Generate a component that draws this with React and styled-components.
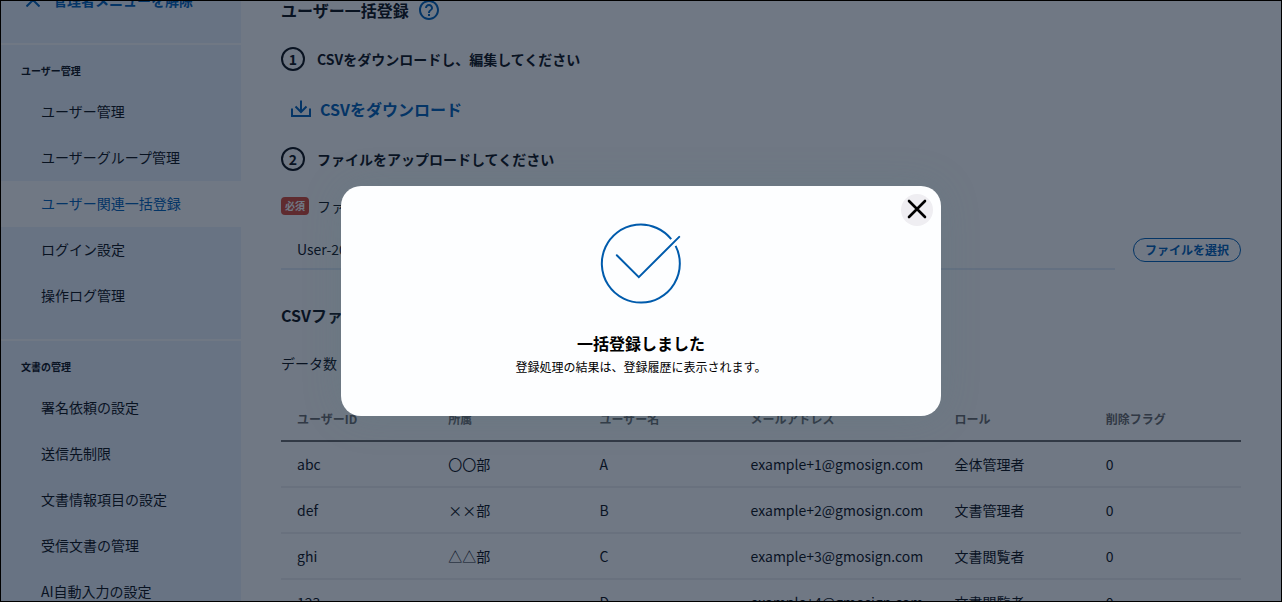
import React, { useState } from 'react'
import styled, { createGlobalStyle, css } from 'styled-components'

const colors = {
    text: '#16191f',
    blue: '#005bac',
    link: '#0a66ba',
    side: '#ecf3fc',
    line: '#f0f0f2',
    red: '#d8503f',
}

const userMenu = ['ユーザー管理', 'ユーザーグループ管理', 'ユーザー関連一括登録', 'ログイン設定', '操作ログ管理']
const docMenu = ['署名依頼の設定', '送信先制限', '文書情報項目の設定', '受信文書の管理', 'AI自動入力の設定']

const columns = ['ユーザーID', '所属', 'ユーザー名', 'メールアドレス', 'ロール', '削除フラグ']

const users = [
    ['abc', '〇〇部', 'A', 'example+1@gmosign.com', '全体管理者', '0'],
    ['def', '××部', 'B', 'example+2@gmosign.com', '文書管理者', '0'],
    ['ghi', '△△部', 'C', 'example+3@gmosign.com', '文書閲覧者', '0'],
    ['123', '', 'D', 'example+4@gmosign.com', '文書閲覧者', '0'],
]

const NavSection = ({ title, items, active }) => (
    <Section>
        <SectionTitle>{title}</SectionTitle>
        {items.map((item) => (
            <NavLink key={item} href="#" $active={item === active}>{item}</NavLink>
        ))}
    </Section>
)

const CompleteModal = ({ onClose }) => (
    <Overlay>
        <Modal role="dialog" aria-modal="true" aria-labelledby="modal-title">
            <CloseButton type="button" aria-label="閉じる" onClick={onClose}>
                <svg width="32" height="32" viewBox="0 0 32 32" fill="none" stroke="#000" strokeWidth="2.6" strokeLinecap="round">
                    <path d="M8 7l16 16M24 7L8 23" />
                </svg>
            </CloseButton>
            <svg width="82" height="82" viewBox="0 0 82 82" fill="none" stroke={colors.blue} strokeWidth="2" strokeLinecap="round" strokeLinejoin="miter">
                <path d="M71.2 17.1A39 39 0 1 0 75.6 23.900" strokeLinecap="butt" />
                <path d="M16.8 33.3L38.8 55.1L79.2 14.9" />
            </svg>
            <ModalTitle id="modal-title">一括登録しました</ModalTitle>
            <ModalText>登録処理の結果は、登録履歴に表示されます。</ModalText>
        </Modal>
    </Overlay>
)

const App = () => {
    const [open, setOpen] = useState(true)

    return (
        <Frame>
            <GlobalStyle />
            <Layout>
                <Sidebar>
                    <ReleaseButton type="button">
                        <svg width="14" height="14" viewBox="0 0 14 14" fill="none" stroke="currentColor" strokeWidth="2">
                            <path d="M0.5 0.5l13 13M13.5 0.5l-13 13" />
                        </svg>
                        管理者メニューを解除
                    </ReleaseButton>
                    <NavSection title="ユーザー管理" items={userMenu} active="ユーザー関連一括登録" />
                    <NavSection title="文書の管理" items={docMenu} />
                </Sidebar>
                <Main>
                    <TitleRow>
                        <Heading as="h1">ユーザー一括登録</Heading>
                        <HelpButton type="button" aria-label="ヘルプ">
                            <svg width="20" height="20" viewBox="2 2 20 20" fill="currentColor">
                                <path d="M11 18h2v-2h-2v2zm1-16C6.480 2 2 6.480 2 12s4.480 10 10 10 10-4.480 10-10S17.520 2 12 2zm0 18c-4.410 0-8-3.590-8-8s3.590-8 8-8 8 3.590 8 8-3.590 8-8 8zm0-14c-2.210 0-4 1.790-4 4h2c0-1.100.900-2 2-2s2 .900 2 2c0 2-3 1.750-3 5h2c0-2.250 3-2.500 3-5 0-2.210-1.790-4-4-4z" />
                            </svg>
                        </HelpButton>
                    </TitleRow>
                    <Step>
                        <StepNumber>1</StepNumber>
                        CSVをダウンロードし、編集してください
                    </Step>
                    <DownloadLink href="#">
                        <svg width="22" height="20" viewBox="0 0 22 20" fill="none" stroke="currentColor" strokeWidth="2">
                            <path d="M2 9.500V17H20V9.500M11 1.500V13M5.500 7.500L11 13L16.500 7.500" />
                        </svg>
                        CSVをダウンロード
                    </DownloadLink>
                    <Step>
                        <StepNumber>2</StepNumber>
                        ファイルをアップロードしてください
                    </Step>
                    <FieldLabel htmlFor="csv-file">
                        <Required>必須</Required>
                        ファイル
                    </FieldLabel>
                    <FileRow>
                        <FileName id="csv-file" type="text" readOnly defaultValue="User-2024.csv" />
                        <SelectButton type="button">ファイルを選択</SelectButton>
                    </FileRow>
                    <PreviewHeading>CSVファイル</PreviewHeading>
                    <DataCount>データ数</DataCount>
                    <Table>
                        <thead>
                            <tr>
                                {columns.map((name) => (
                                    <Th key={name} $wide={name === 'メールアドレス'}>{name}</Th>
                                ))}
                            </tr>
                        </thead>
                        <tbody>
                            {users.map((row) => (
                                <tr key={row[0]}>
                                    {row.map((cell, i) => <Td key={i}>{cell}</Td>)}
                                </tr>
                            ))}
                        </tbody>
                    </Table>
                </Main>
            </Layout>
            {open && <CompleteModal onClose={() => setOpen(false)} />}
        </Frame>
    )
}

export default App


const GlobalStyle = createGlobalStyle`
    * {
        box-sizing: border-box;
    }

    body {
        margin: 0;
        font-family: "Noto Sans CJK JP", sans-serif;
        font-size: 14px;
        line-height: 24px;
        color: ${colors.text};
        background-color: #fff;
    }

    h1, h2, p {
        margin: 0;
    }

    button, input {
        font-family: inherit;
        color: inherit;
    }

    svg {
        flex-shrink: 0;
    }
`

const Frame = styled.div`
    position: relative;
    height: 100vh;
    border: 1px solid #000;
    overflow: hidden;
`

/* starts slightly scrolled under the top edge */
const Layout = styled.div`
    display: flex;
    min-height: calc(100vh + 20px);
    margin-top: -20px;
`

const Sidebar = styled.nav`
    flex: 0 0 240px;
    background-color: ${colors.side};
`

const ReleaseButton = styled.button`
    display: flex;
    align-items: center;
    gap: 13px;
    height: 38px;
    margin-bottom: 24px;
    padding: 0 0 0 25px;
    border: 0;
    background: none;
    color: ${colors.link};
    font-size: 14px;
    font-weight: 700;
`

const Section = styled.section`
    padding: 16px 0 20px;
    border-top: 2px solid #fff;
`

const SectionTitle = styled.h2`
    padding: 0 20px 8px;
    font-size: 10px;
    font-weight: 700;
    line-height: 20px;
`

const NavLink = styled.a`
    display: block;
    padding: 0 0 2px 40px;
    line-height: 44px;
    color: ${colors.text};
    text-decoration: none;

    ${(props) => props.$active && css`
        background-color: #fff;
        color: ${colors.link};
    `}
`

const Main = styled.main`
    flex: 1;
    min-width: 0;
    padding: 15px 40px 40px;
`

const TitleRow = styled.div`
    display: flex;
    align-items: center;
    gap: 10px;
    height: 28px;
    margin-bottom: 23px;
`

const Heading = styled.h2`
    font-size: 16px;
    font-weight: 700;
    line-height: 28px;
`

const HelpButton = styled.button`
    display: flex;
    padding: 0;
    border: 0;
    background: none;
    color: ${colors.link};
`

const Step = styled.p`
    display: flex;
    align-items: center;
    gap: 12px;
    font-weight: 700;
`

const StepNumber = styled.span`
    width: 24px;
    height: 24px;
    border: 2px solid ${colors.text};
    border-radius: 50%;
    line-height: 20px;
    text-align: center;
`

const DownloadLink = styled.a`
    display: flex;
    align-items: center;
    gap: 8px;
    width: fit-content;
    margin: 26px 0;
    padding-left: 9px;
    color: ${colors.link};
    font-size: 16px;
    font-weight: 700;
    text-decoration: none;
`

const FieldLabel = styled.label`
    display: flex;
    align-items: center;
    gap: 8px;
    margin-top: 23px;
`

const Required = styled.span`
    padding: 0 4px;
    border-radius: 4px;
    background-color: ${colors.red};
    color: #fff;
    font-size: 10px;
    font-weight: 700;
    line-height: 18px;
`

const FileRow = styled.div`
    display: flex;
    align-items: center;
    gap: 18px;
    margin-top: 12px;
`

const FileName = styled.input`
    flex: 1;
    min-width: 0;
    height: 40px;
    padding: 0 16px;
    border: 0;
    border-bottom: 2px solid #e4edf8;
    background: none;
    font-size: 14px;
    outline: none;
`

const SelectButton = styled.button`
    height: 24px;
    padding: 0 11px;
    border: 1px solid ${colors.link};
    border-radius: 12px;
    background: none;
    color: ${colors.link};
    font-size: 12px;
    font-weight: 700;
    line-height: 22px;
`

const PreviewHeading = styled(Heading)`
    padding-top: 31px;
`

const DataCount = styled.p`
    padding: 22px 0 21px;
`

const Table = styled.table`
    width: 100%;
    table-layout: fixed;
    border-spacing: 0;
`

const Th = styled.th`
    width: ${(props) => props.$wide ? '204px' : 'auto'};
    height: 46px;
    padding: 2px 16px 0;
    border-bottom: 2px solid #707070;
    color: #707070;
    font-size: 12px;
    font-weight: 700;
    text-align: left;
`

const Td = styled.td`
    height: 46px;
    padding: 0 16px;
    border-bottom: 2px solid ${colors.line};
    white-space: nowrap;
`

const Overlay = styled.div`
    position: absolute;
    inset: 0;
    display: flex;
    align-items: center;
    justify-content: center;
    background-color: rgba(0, 14, 36, 0.56);
`

const Modal = styled.div`
    position: relative;
    display: flex;
    flex-direction: column;
    align-items: center;
    width: 600px;
    max-width: 90%;
    padding: 36px 36px 37px;
    border-radius: 20px;
    background-color: #fdfeff;
    box-shadow: 0 0 40px rgba(80, 125, 125, 0.2);
    color: #000;
`

const CloseButton = styled.button`
    position: absolute;
    top: 8px;
    right: 8px;
    display: flex;
    padding: 0;
    border: 0;
    border-radius: 50%;
    background-color: #efeef2;
`

const ModalTitle = styled.h2`
    padding-top: 27px;
    font-size: 16px;
    font-weight: 700;
`

const ModalText = styled.p`
    font-size: 12px;
`
